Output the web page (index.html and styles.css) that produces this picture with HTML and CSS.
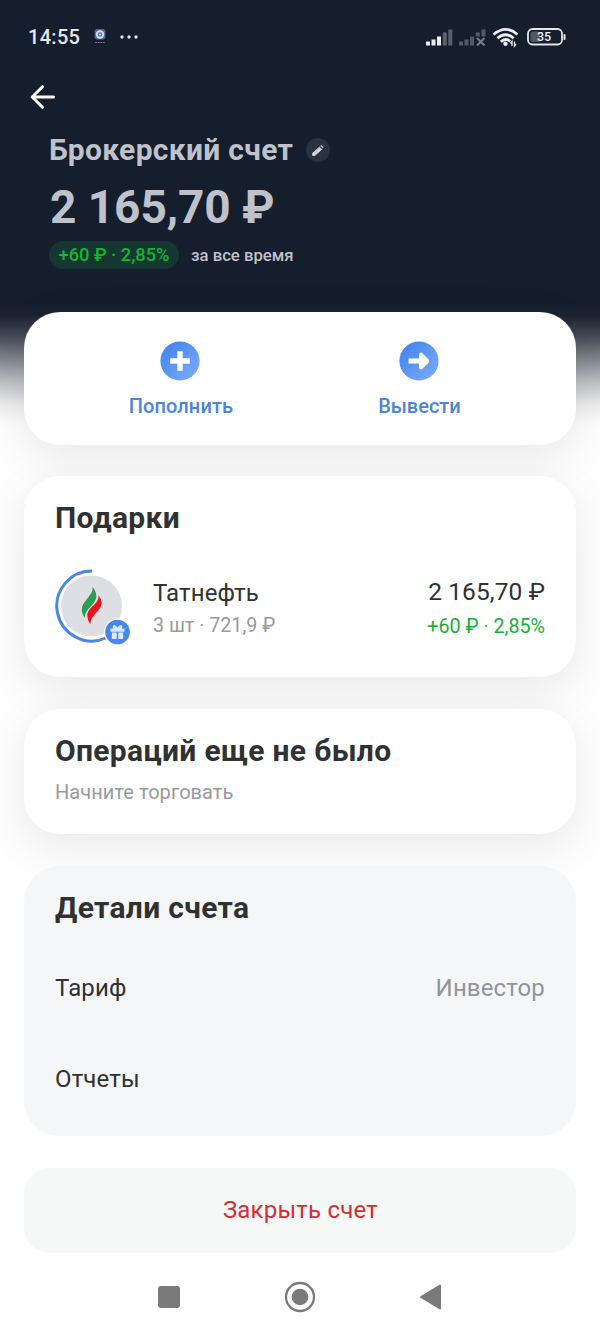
FILE: index.html
```html
<!DOCTYPE html>
<html lang="ru">
<head>
<meta charset="utf-8">
<title>Брокерский счет</title>
<link rel="stylesheet" href="styles.css">
</head>
<body>
<div class="screen">
  <div class="status">
    <span class="clock">14:55</span>
    <svg class="app-icon" width="14" height="16" viewBox="0 0 14 16"><rect x="1.500" y="0" width="11" height="10.500" rx="3" fill="#56668a"/><circle cx="7" cy="5.500" r="4.200" fill="#d4def0"/><circle cx="7" cy="5.500" r="2.300" fill="#416eb5"/><circle cx="7" cy="5.500" r="1" fill="#dce8fa"/><path d="M2 13.500h10" stroke="#85707e" stroke-width="1.200" stroke-dasharray="2 .6"/></svg>
    <svg class="dots" width="18" height="4" viewBox="0 0 18 4" fill="#dfe3ea"><circle cx="2" cy="2" r="1.700"/><circle cx="9" cy="2" r="1.700"/><circle cx="16" cy="2" r="1.700"/></svg>
    <svg class="signals" width="142" height="24" viewBox="0 0 142 24">
      <g stroke-width="4" fill="none">
        <path d="M3 20.500v-4M8.500 20.500v-6M14 20.500v-9" stroke="#e9edf3"/>
        <path d="M19.800 20.500v-13M25.300 20.500v-16" stroke="#59616e"/>
        <path d="M36 20.500v-4M41.500 20.500v-6M47 20.500v-9M52.800 11.500v-4M58.500 11.500v-7" stroke="#515a68"/>
      </g>
      <path d="M52 13l7.500 7.500m0-7.500l-7.500 7.500" stroke="#747b87" stroke-width="2.200"/>
      <g fill="none" stroke="#e9edf3" stroke-width="2.800">
        <path d="M68.500 9.500Q80.500 -.8 92.500 9.500M72.300 13.300Q80.500 6.200 88.700 13.300M75.800 16.800Q80.500 12.500 85.200 16.300"/>
      </g>
      <circle cx="80.500" cy="18.800" r="2.200" fill="#e9edf3"/>
      <path d="M87 21v-4.500l-1.500 2M89.500 16.500V21l1.500-2" stroke="#e9edf3" stroke-width="1.300" fill="none"/>
      <rect x="103" y="4" width="34" height="15.500" rx="4.500" fill="none" stroke="#e2e6ed" stroke-width="1.800"/>
      <rect x="105.500" y="6.500" width="9.500" height="10.500" rx="2" fill="#515965"/>
      <rect x="138.500" y="9" width="2" height="6" rx="1" fill="#e2e6ed"/>
      <text class="battery-text" x="119" y="16.300" text-anchor="middle">35</text>
    </svg>
  </div>
  <div class="toolbar">
    <svg width="26" height="26" viewBox="0 0 26 26" fill="none" stroke="#fff" stroke-width="3" stroke-linecap="round" stroke-linejoin="round"><path d="M23.500 13H3M12.500 2.700L2.200 13l10.300 10.300"/></svg>
  </div>
  <header class="summary">
    <div class="title-row"><h1>Брокерский счет</h1>
      <svg width="24" height="24" viewBox="0 0 24 24"><circle cx="12" cy="12" r="12" fill="#293240"/><path d="M6.500 17.300v-1.900L13.500 9.200l2.100 2.200-6.900 6.200z" fill="#d0d3da" stroke="#d0d3da" stroke-linejoin="round"/><path d="M14.700 8l.8-.6 1.700 1.700-.6.800z" fill="#a5abb5" stroke="#a5abb5" stroke-linejoin="round"/></svg>
    </div>
    <div class="amount">2 165,70 ₽</div>
    <div class="profit-row"><span class="chip">+60 ₽ · 2,85%</span><span class="period">за все время</span></div>
  </header>
  <main class="cards">
    <section class="card actions">
      <div class="action">
        <svg width="40" height="40" viewBox="0 0 40 40"><defs><linearGradient id="blue" x1="0" y1="0" x2="1" y2="1"><stop offset=".1" stop-color="#4484ea"/><stop offset="1" stop-color="#7eafff"/></linearGradient></defs><circle cx="20" cy="20" r="19.600" fill="url(#blue)"/><path d="M20 10.200v19.600M10.200 20h19.600" stroke="#fff" stroke-width="5.400"/></svg>
        <span class="deposit">Пополнить</span>
      </div>
      <div class="action">
        <svg width="40" height="40" viewBox="0 0 40 40"><circle cx="20" cy="20" r="19.600" fill="url(#blue)"/><path d="M9.500 20H26" stroke="#fff" stroke-width="5"/><path d="M22 13.600L28.300 20 22 26.400z" fill="#fff" stroke="#fff" stroke-width="4" stroke-linecap="round" stroke-linejoin="round"/></svg>
        <span class="withdraw">Вывести</span>
      </div>
    </section>
    <section class="card gifts">
      <h2>Подарки</h2>
      <div class="asset">
        <svg width="78" height="78" viewBox="0 0 78 78">
          <circle cx="36.500" cy="37" r="30.500" fill="#dddfe4"/>
          <path d="M37 2A35 35 0 1 0 51 69" fill="none" stroke="#4c87e4" stroke-width="3"/>
          <path d="M37.500 18C39 26 27 32 26.800 40q-.2 5 3.300 9C29 40 41 36 41.300 27.500Q41.300 22 37.500 18z" fill="#2d9e50"/>
          <path d="M43.500 26.500C44.500 35 32.500 38 32.300 46.500q0 5 3 9C35.500 45.500 46.500 42 46.700 34q0-4-3.200-7.500z" fill="#e8151f"/>
          <circle cx="62.500" cy="63" r="13.600" fill="#fff"/><circle cx="62.500" cy="63" r="12.300" fill="#4786ef"/>
          <g transform="translate(-.5)"><path d="M56 59.500h14v3.300H56zM57.300 63.600h4.900V70h-3.900q-1 0-1-1zM63.800 63.600h4.900V69q0 1-1 1h-3.900z" fill="#dfeaff"/>
          <path d="M63 59.500q-4.500 0-4-2t4 2q3.500-4 4-2t-4 2" fill="none" stroke="#dfeaff" stroke-width="1.600"/></g>
        </svg>
        <div class="asset-name"><div class="primary">Татнефть</div><div class="secondary">3 шт · 721,9 ₽</div></div>
        <div class="asset-value"><div class="primary sum">2 165,70 ₽</div><div class="gain">+60 ₽ · 2,85%</div></div>
      </div>
    </section>
    <section class="card operations"><h2>Операций еще не было</h2><p class="hint">Начните торговать</p></section>
    <section class="card details">
      <h2>Детали счета</h2>
      <div class="detail-row"><span>Тариф</span><span class="value">Инвестор</span></div>
      <div class="detail-row"><span>Отчеты</span></div>
    </section>
    <button class="close">Закрыть счет</button>
  </main>
  <nav class="navbar">
    <svg width="32" height="32" viewBox="0 0 32 32"><rect x="5" y="5" width="22" height="22" rx="3" fill="#7a7a7a"/></svg>
    <svg width="32" height="32" viewBox="0 0 32 32"><circle cx="16" cy="16" r="14" fill="none" stroke="#7a7a7a" stroke-width="2.300"/><circle cx="16" cy="16" r="8.300" fill="#7a7a7a"/></svg>
    <svg width="32" height="32" viewBox="0 0 32 32"><path d="M25 4.500v23L6 16z" fill="#7a7a7a" stroke="#7a7a7a" stroke-width="2" stroke-linejoin="round"/></svg>
  </nav>
</div>
</body>
</html>
```
FILE: styles.css
```css
* { box-sizing: border-box; }
body { margin: 0; background: #fefefe; font-family: Roboto, "Noto Sans", sans-serif; color: #303132; }
h1, h2, p { margin: 0; }
svg { display: block; flex: none; }
.screen {
  height: 1332px;
  display: flex;
  flex-direction: column;
  overflow: hidden;
  background: linear-gradient(#151e2c 0 304px, #1c2432 316px, #484e59 338px, #898c94 362px, #c3c4c8 384px, #eeeeef 406px, #fefefe 426px);
}
.status { height: 74px; display: flex; align-items: center; padding: 0 33px 0 28px; }
.clock { font-size: 20px; font-weight: 500; color: #e3e7ee; letter-spacing: .3px; width: 52px; white-space: nowrap; }
.app-icon { margin-left: 13px; }
.dots { margin-left: 13px; }
.signals { margin-left: auto; }
.battery-text { font: 500 12.500px Roboto, sans-serif; fill: #edf0f4; }
.toolbar { height: 46px; display: flex; align-items: center; padding-left: 30px; }
.summary { height: 192px; padding: 12px 49px 0; color: #bfc2ca; }
.title-row { display: flex; align-items: center; gap: 13px; height: 36px; }
h1 { font-size: 30px; line-height: 36px; font-weight: 700; letter-spacing: .32px; white-space: nowrap; }
.amount { margin: 13px 0 0 1px; font-size: 46px; line-height: 52px; font-weight: 700; letter-spacing: -.05px; white-space: nowrap; }
.profit-row { display: flex; align-items: center; margin-top: 8px; gap: 12px; }
.chip { width: 130px; height: 28px; border-radius: 14px; background: #153631; color: #12b633; font-size: 18.300px; line-height: 28px; font-weight: 500; text-align: center; white-space: nowrap; }
.period { font-size: 16.700px; font-weight: 500; white-space: nowrap; }
.cards { display: flex; flex-direction: column; padding: 0 24.500px 0 24.400px; }
.card { background: #fff; border-radius: 36px; padding: 24px 30.500px 0 30.600px; margin-bottom: 31.500px; box-shadow: 0 12px 46px rgba(0, 0, 0, .09); }
.actions { height: 132.500px; display: grid; grid-template-columns: 239px 239px; justify-content: center; padding: 29px 1px 0 0; }
.action { display: flex; flex-direction: column; align-items: center; gap: 13px; color: #4c84dc; font-size: 20px; line-height: 24px; font-weight: 500; }
.deposit { margin-left: 2px; letter-spacing: .1px; }
.withdraw { margin-left: 1px; }
.gifts { height: 201px; }
h2 { font-size: 30px; line-height: 36px; font-weight: 700; letter-spacing: .33px; white-space: nowrap; }
.asset { display: flex; margin-top: 33px; }
.asset-name { margin-left: 20px; padding-top: 9px; }
.asset-value { margin-left: auto; text-align: right; padding-top: 8px; }
.primary { font-size: 24px; line-height: 30px; letter-spacing: .1px; }
.sum { font-size: 24.500px; }
.secondary { font-size: 19.700px; line-height: 24px; margin-top: 6px; }
.gain { font-size: 19.700px; line-height: 24px; margin-top: 8px; color: #1bad37; }
.secondary, .hint { color: #97999e; }
.operations { height: 125.500px; }
.hint { font-size: 20px; line-height: 24px; margin-top: 11px; letter-spacing: .05px; }
.details { height: 270.500px; background: #f5f6f8; box-shadow: none; }
.detail-row { display: flex; justify-content: space-between; font-size: 24px; line-height: 30px; letter-spacing: .15px; margin-top: 47px; }
.detail-row + .detail-row { margin-top: 61.500px; }
.value { color: #9093a0; }
.close { height: 85px; border: 0; border-radius: 26px; background: #f6f8f8; color: #d92c32; font: 24px/30px Roboto, sans-serif; letter-spacing: .2px; padding: 0 0 0 1px; }
.navbar { display: flex; justify-content: center; gap: 99px; margin: 28px 1px 0 0; }
```
